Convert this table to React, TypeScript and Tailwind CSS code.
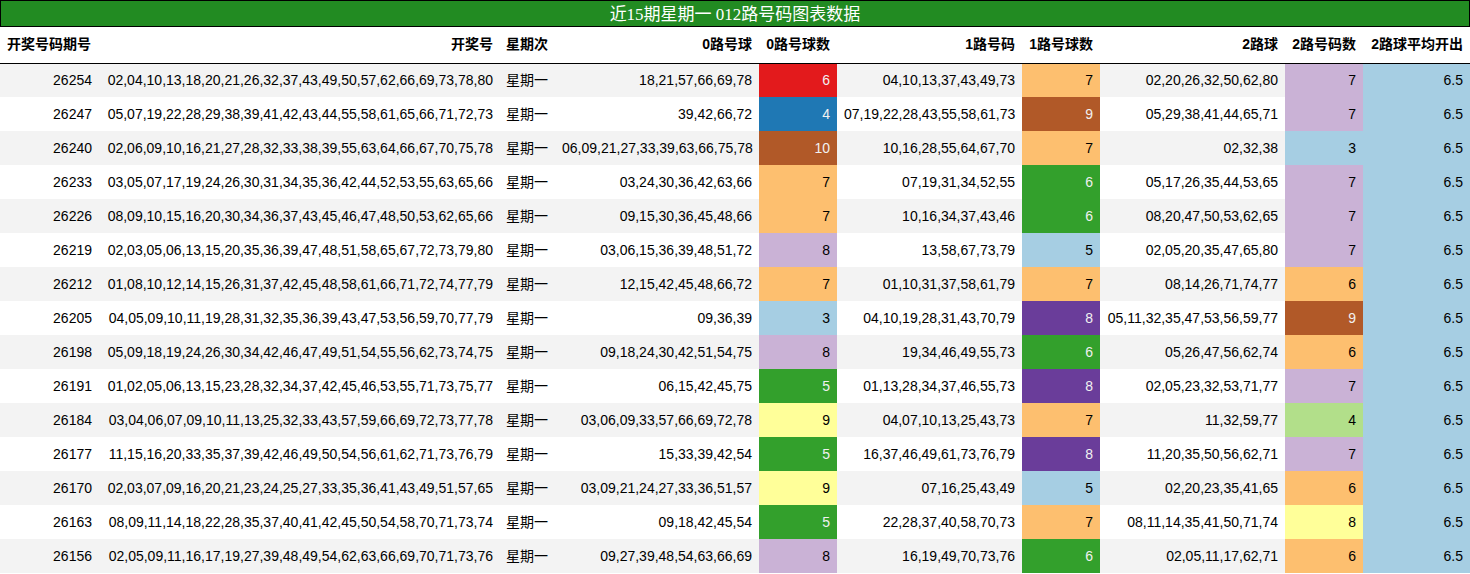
const C = {
  red: '#e31a1c',
  blue: '#1f78b4',
  brown: '#b15928',
  orange: '#fdbf6f',
  lav: '#cab2d6',
  lblue: '#a6cee3',
  green: '#33a02c',
  dpurple: '#6a3d9a',
  yellow: '#ffff99',
  lgreen: '#b2df8a',
};

const dark = new Set([C.red, C.blue, C.brown, C.green, C.dpurple]);

type Row = [string, string, string, number, string, string, number, string, string, number, string];

const rows: Row[] = [
  ['26254', '02,04,10,13,18,20,21,26,32,37,43,49,50,57,62,66,69,73,78,80', '18,21,57,66,69,78', 6, C.red, '04,10,13,37,43,49,73', 7, C.orange, '02,20,26,32,50,62,80', 7, C.lav],
  ['26247', '05,07,19,22,28,29,38,39,41,42,43,44,55,58,61,65,66,71,72,73', '39,42,66,72', 4, C.blue, '07,19,22,28,43,55,58,61,73', 9, C.brown, '05,29,38,41,44,65,71', 7, C.lav],
  ['26240', '02,06,09,10,16,21,27,28,32,33,38,39,55,63,64,66,67,70,75,78', '06,09,21,27,33,39,63,66,75,78', 10, C.brown, '10,16,28,55,64,67,70', 7, C.orange, '02,32,38', 3, C.lblue],
  ['26233', '03,05,07,17,19,24,26,30,31,34,35,36,42,44,52,53,55,63,65,66', '03,24,30,36,42,63,66', 7, C.orange, '07,19,31,34,52,55', 6, C.green, '05,17,26,35,44,53,65', 7, C.lav],
  ['26226', '08,09,10,15,16,20,30,34,36,37,43,45,46,47,48,50,53,62,65,66', '09,15,30,36,45,48,66', 7, C.orange, '10,16,34,37,43,46', 6, C.green, '08,20,47,50,53,62,65', 7, C.lav],
  ['26219', '02,03,05,06,13,15,20,35,36,39,47,48,51,58,65,67,72,73,79,80', '03,06,15,36,39,48,51,72', 8, C.lav, '13,58,67,73,79', 5, C.lblue, '02,05,20,35,47,65,80', 7, C.lav],
  ['26212', '01,08,10,12,14,15,26,31,37,42,45,48,58,61,66,71,72,74,77,79', '12,15,42,45,48,66,72', 7, C.orange, '01,10,31,37,58,61,79', 7, C.orange, '08,14,26,71,74,77', 6, C.orange],
  ['26205', '04,05,09,10,11,19,28,31,32,35,36,39,43,47,53,56,59,70,77,79', '09,36,39', 3, C.lblue, '04,10,19,28,31,43,70,79', 8, C.dpurple, '05,11,32,35,47,53,56,59,77', 9, C.brown],
  ['26198', '05,09,18,19,24,26,30,34,42,46,47,49,51,54,55,56,62,73,74,75', '09,18,24,30,42,51,54,75', 8, C.lav, '19,34,46,49,55,73', 6, C.green, '05,26,47,56,62,74', 6, C.orange],
  ['26191', '01,02,05,06,13,15,23,28,32,34,37,42,45,46,53,55,71,73,75,77', '06,15,42,45,75', 5, C.green, '01,13,28,34,37,46,55,73', 8, C.dpurple, '02,05,23,32,53,71,77', 7, C.lav],
  ['26184', '03,04,06,07,09,10,11,13,25,32,33,43,57,59,66,69,72,73,77,78', '03,06,09,33,57,66,69,72,78', 9, C.yellow, '04,07,10,13,25,43,73', 7, C.orange, '11,32,59,77', 4, C.lgreen],
  ['26177', '11,15,16,20,33,35,37,39,42,46,49,50,54,56,61,62,71,73,76,79', '15,33,39,42,54', 5, C.green, '16,37,46,49,61,73,76,79', 8, C.dpurple, '11,20,35,50,56,62,71', 7, C.lav],
  ['26170', '02,03,07,09,16,20,21,23,24,25,27,33,35,36,41,43,49,51,57,65', '03,09,21,24,27,33,36,51,57', 9, C.yellow, '07,16,25,43,49', 5, C.lblue, '02,20,23,35,41,65', 6, C.orange],
  ['26163', '08,09,11,14,18,22,28,35,37,40,41,42,45,50,54,58,70,71,73,74', '09,18,42,45,54', 5, C.green, '22,28,37,40,58,70,73', 7, C.orange, '08,11,14,35,41,50,71,74', 8, C.yellow],
  ['26156', '02,05,09,11,16,17,19,27,39,48,49,54,62,63,66,69,70,71,73,76', '09,27,39,48,54,63,66,69', 8, C.lav, '16,19,49,70,73,76', 6, C.green, '02,05,11,17,62,71', 6, C.orange],
];

function NumCell({ value, bg }: { value: number; bg: string }) {
  return (
    <td
      className="px-[7px] text-right"
      style={{ backgroundColor: bg, color: dark.has(bg) ? '#f1f1f1' : '#000000' }}
    >
      {value}
    </td>
  );
}

export default function App() {
  return (
    <div className="w-[1470px] bg-white font-['Liberation_Sans','Noto_Sans_CJK_SC',sans-serif] text-[14px] text-black">
      <div className="h-[27px] border border-black bg-[#228b22] text-center font-['Liberation_Serif','Noto_Sans_CJK_SC',serif] text-[17px] leading-[27px] text-white">
        近15期星期一 012路号码图表数据
      </div>
      <table className="w-[1470px] table-fixed border-collapse">
        <colgroup>
          <col className="w-[100px]" />
          <col className="w-[400px]" />
          <col className="w-[55px]" />
          <col className="w-[204px]" />
          <col className="w-[78px]" />
          <col className="w-[185px]" />
          <col className="w-[78px]" />
          <col className="w-[185px]" />
          <col className="w-[78px]" />
          <col className="w-[107px]" />
        </colgroup>
        <thead>
          <tr className="h-[36px] border-b border-black font-bold">
            <th className="px-[7px] text-left font-bold">开奖号码期号</th>
            <th className="px-[7px] text-right font-bold">开奖号</th>
            <th className="px-[6px] text-left font-bold">星期次</th>
            <th className="px-[7px] text-right font-bold">0路号球</th>
            <th className="px-[7px] text-right font-bold">0路号球数</th>
            <th className="px-[7px] text-right font-bold">1路号码</th>
            <th className="px-[7px] text-right font-bold">1路号球数</th>
            <th className="px-[7px] text-right font-bold">2路球</th>
            <th className="px-[7px] text-right font-bold">2路号码数</th>
            <th className="px-[7px] text-right font-bold">2路球平均开出</th>
          </tr>
        </thead>
        <tbody>
          {rows.map((r, i) => (
            <tr key={r[0]} className={i % 2 === 0 ? 'h-[34px] bg-[#f3f3f3]' : 'h-[34px] bg-white'}>
              <td className="px-[8px] text-right">{r[0]}</td>
              <td className="px-[7px] text-right">{r[1]}</td>
              <td className="px-[6px] text-left">星期一</td>
              <td className="px-[7px] text-right">{r[2]}</td>
              <NumCell value={r[3]} bg={r[4]} />
              <td className="px-[7px] text-right">{r[5]}</td>
              <NumCell value={r[6]} bg={r[7]} />
              <td className="px-[7px] text-right">{r[8]}</td>
              <NumCell value={r[9]} bg={r[10]} />
              <td className="bg-[#a6cee3] px-[7px] text-right">6.5</td>
            </tr>
          ))}
        </tbody>
      </table>
    </div>
  );
}
